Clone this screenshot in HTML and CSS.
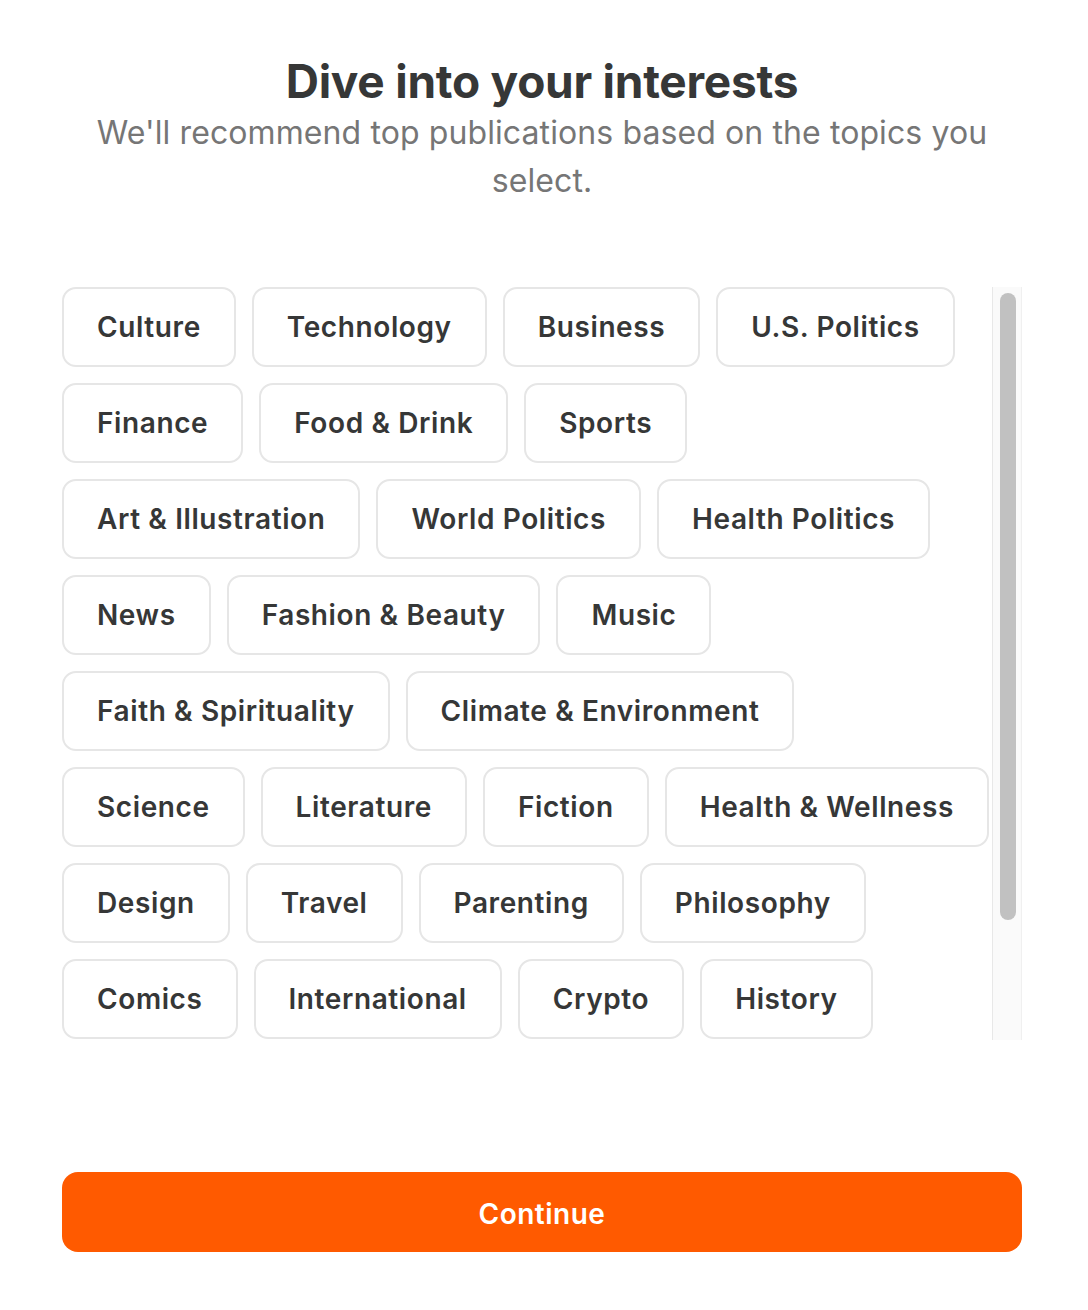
FILE: index.html
```html
<!DOCTYPE html>
<html lang="en">
<head>
<meta charset="utf-8">
<title>Dive into your interests</title>
<link rel="stylesheet" href="styles.css">
</head>
<body>
<main class="page">
  <header class="intro">
    <h1 class="title">Dive into your interests</h1>
    <p class="subtitle">We'll recommend top publications based on the topics you select.</p>
  </header>
  <div class="topics">
    <div class="chips">
      <ul class="chip-row">
        <li class="chip">Culture</li>
        <li class="chip">Technology</li>
        <li class="chip">Business</li>
        <li class="chip">U.S. Politics</li>
      </ul>
      <ul class="chip-row">
        <li class="chip">Finance</li>
        <li class="chip">Food &amp; Drink</li>
        <li class="chip">Sports</li>
      </ul>
      <ul class="chip-row">
        <li class="chip">Art &amp; Illustration</li>
        <li class="chip">World Politics</li>
        <li class="chip">Health Politics</li>
      </ul>
      <ul class="chip-row">
        <li class="chip">News</li>
        <li class="chip">Fashion &amp; Beauty</li>
        <li class="chip">Music</li>
      </ul>
      <ul class="chip-row">
        <li class="chip">Faith &amp; Spirituality</li>
        <li class="chip">Climate &amp; Environment</li>
      </ul>
      <ul class="chip-row">
        <li class="chip">Science</li>
        <li class="chip">Literature</li>
        <li class="chip">Fiction</li>
        <li class="chip">Health &amp; Wellness</li>
      </ul>
      <ul class="chip-row">
        <li class="chip">Design</li>
        <li class="chip">Travel</li>
        <li class="chip">Parenting</li>
        <li class="chip">Philosophy</li>
      </ul>
      <ul class="chip-row">
        <li class="chip">Comics</li>
        <li class="chip">International</li>
        <li class="chip">Crypto</li>
        <li class="chip">History</li>
      </ul>
    </div>
    <div class="scrollbar" aria-hidden="true">
      <div class="scrollbar-thumb"></div>
    </div>
  </div>
  <button class="continue" type="button">Continue</button>
</main>
</body>
</html>
```

FILE: styles.css
```css
* { box-sizing: border-box; }

html, body {
  margin: 0;
  padding: 0;
  background: #ffffff;
}

body {
  font-family: Inter, "Noto Sans", "Liberation Sans", sans-serif;
  color: #363737;
}

.page {
  width: 960px;
  margin-left: 62px;
  padding-top: 53px;
  display: flex;
  flex-direction: column;
}

.intro {
  text-align: center;
}

.title {
  margin: 0;
  font-size: 46px;
  line-height: 56px;
  font-weight: 700;
  letter-spacing: -0.25px;
  color: #363737;
}

.subtitle {
  margin: 0;
  font-size: 32px;
  line-height: 48px;
  font-weight: 400;
  letter-spacing: 0.1px;
  color: #767676;
}

.topics {
  margin-top: 82px;
  height: 753px;
  display: flex;
}

.chips {
  flex: 1;
  min-width: 0;
  overflow: hidden;
  display: flex;
  flex-direction: column;
  gap: 16px;
}

.chip-row {
  list-style: none;
  margin: 0;
  padding: 0;
  display: flex;
  gap: 16px;
}

.chip {
  border: 2px solid #e6e6e6;
  border-radius: 14px;
  padding: 21px 33px;
  font-size: 28px;
  line-height: 34px;
  font-weight: 600;
  letter-spacing: 0.6px;
  color: #363737;
  white-space: nowrap;
}

.scrollbar {
  flex: none;
  width: 30px;
  background: #fafafa;
  border-left: 1px solid #e8e8e8;
  border-right: 1px solid #f0f0f0;
  padding: 6px 6px 0 7px;
}

.scrollbar-thumb {
  width: 16px;
  height: 627px;
  border-radius: 8px;
  background: #c1c1c1;
}

.continue {
  margin-top: 132px;
  height: 80px;
  width: 960px;
  border: none;
  border-radius: 16px;
  background: #ff5a00;
  color: #ffffff;
  font-family: Inter, "Noto Sans", "Liberation Sans", sans-serif;
  font-size: 28px;
  line-height: 36px;
  font-weight: 600;
  letter-spacing: 0.5px;
  padding: 3px 0 0;
}
```
